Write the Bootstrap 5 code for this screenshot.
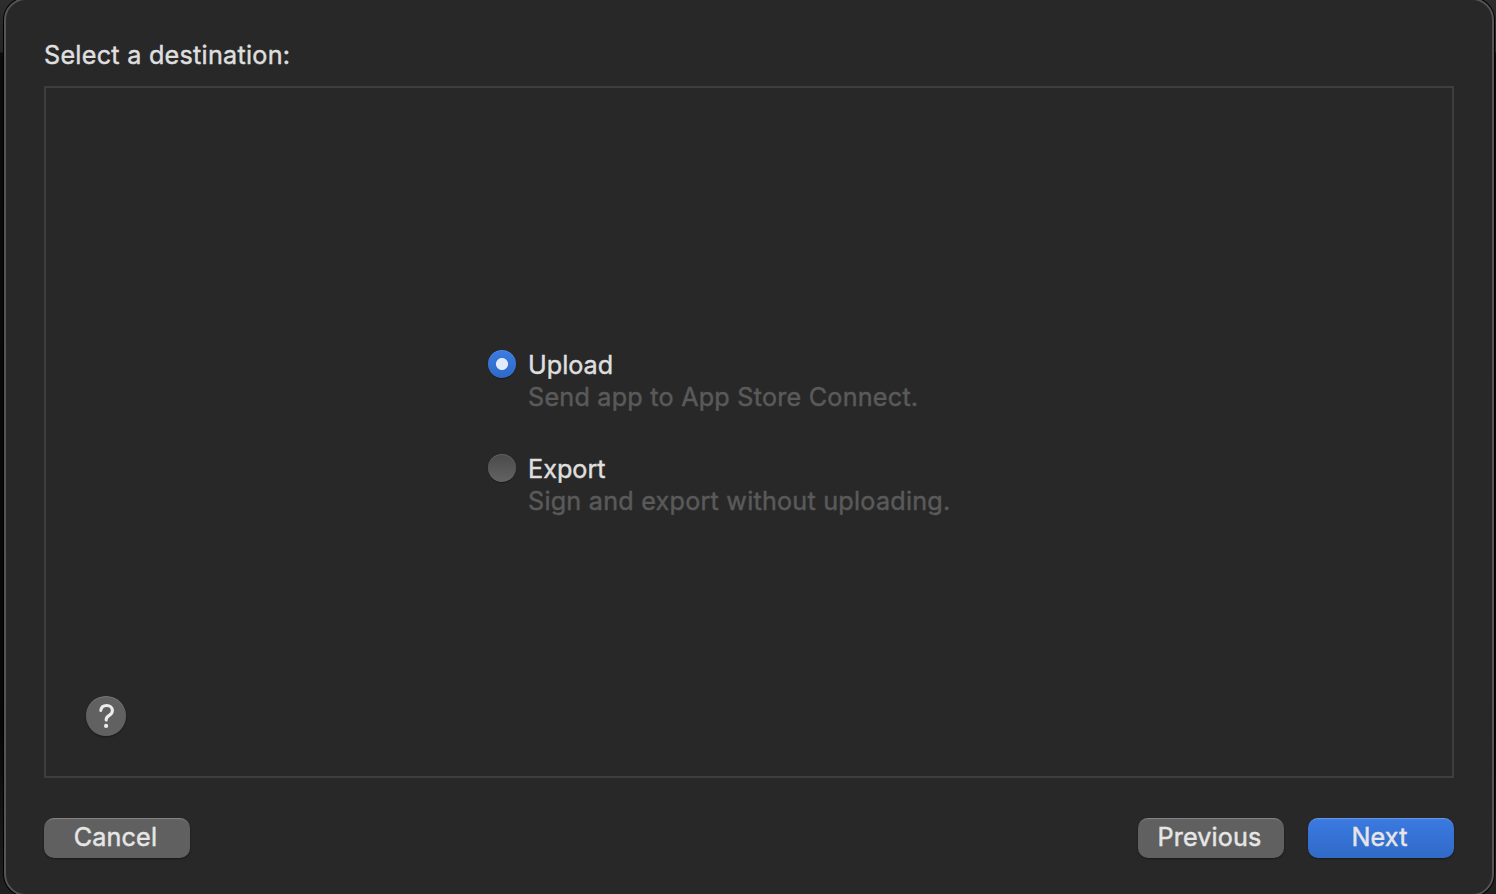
<!DOCTYPE html>
<html lang="en">
<head>
    <meta charset="UTF-8">
    <meta name="viewport" content="width=device-width, initial-scale=1">
    <title>Select a destination</title>
    <link href="https://cdn.jsdelivr.net/npm/bootstrap@5.3.3/dist/css/bootstrap.min.css" rel="stylesheet">
    <style>
        body { height: 894px; background: linear-gradient(#2d2d2d 0, #242424 52px, #0b0b0b 53px, #070707 82%, #202020); color: #dfdfdf; font: 25.2px/32px Inter, "Liberation Sans", sans-serif; -webkit-text-stroke: .45px; }
        .sheet { height: 898px; margin: -2px 2px 0 4px; padding: 40px 38px 38px; background: #282828; border: 2px solid #555; border-radius: 22px; box-shadow: 0 0 0 1px #000; }
        .sheet-title { height: 46px; font-size: 25.2px; line-height: 30px; letter-spacing: .26px; }
        .pane { height: 692px; border: 2px solid #3e3e3e; padding: 258px 40px 40px; }
        .choices { width: 480px; margin-left: 402px; }
        .choice { height: 104px; gap: 12px; }
        .choice label { padding-top: 3px; }
        .hint { color: #5a5a5a; letter-spacing: .22px; white-space: nowrap; }
        .dot { width: 28px; height: 28px; margin: 4px 0 0; border: 0; background: linear-gradient(#4a4a4a, #636363); box-shadow: 0 1px 1px rgba(0,0,0,.35), inset 0 1px 0 rgba(255,255,255,.12); }
        .dot:checked { background: radial-gradient(circle, #e1eafa 5.6px, transparent 6.4px), linear-gradient(#3b7be3, #3069c6); }
        .help { width: 40px; height: 40px; background: #616161; box-shadow: 0 1px 2px rgba(0,0,0,.35), inset 0 1px 0 rgba(255,255,255,.15); }
        .actions { margin-top: 40px; gap: 24px; }
        .push { --bs-btn-color: #e6e6e6; --bs-btn-bg: #606060; --bs-btn-hover-color: #e6e6e6; --bs-btn-hover-bg: #6a6a6a; width: 146px; height: 40px; padding: 0 3px 2px 0; border: 0; border-radius: 10px; font-size: 25.2px; line-height: 38px; letter-spacing: .12px; -webkit-text-stroke: .45px; box-shadow: 0 1px 2px rgba(0,0,0,.4), inset 0 2px 1px -1px rgba(255,255,255,.25); }
        .push-blue { background: linear-gradient(#3b7ae1, #316ac7); }
    </style>
</head>
<body class="overflow-hidden">
<div class="sheet">
    <h1 class="sheet-title fw-normal mb-0">Select a destination:</h1>
    <div class="pane d-flex flex-column justify-content-between">
        <div class="choices">
            <div class="choice d-flex">
                <input class="form-check-input dot flex-shrink-0" type="radio" name="destination" id="upload" checked>
                <label for="upload">Upload<br><span class="hint">Send app to App Store Connect.</span></label>
            </div>
            <div class="choice d-flex">
                <input class="form-check-input dot flex-shrink-0" type="radio" name="destination" id="export">
                <label for="export">Export<br><span class="hint">Sign and export without uploading.</span></label>
            </div>
        </div>
        <button type="button" class="help btn rounded-circle border-0 p-0 d-flex" aria-label="Help">
            <svg width="40" height="40" viewBox="0 0 40 40" fill="none">
                <path d="M14.8 14.4C15.2 11.2 17.4 9.5 20.6 9.5C24 9.5 26.4 11.5 26.4 14.5C26.4 16.8 25.3 18.1 23.2 19.4C21.1 20.7 20.2 21.8 20.2 23.5V24" stroke="#ececec" stroke-width="3.1" stroke-linecap="round"/>
                <circle cx="20.1" cy="29.9" r="2.1" fill="#ececec"/>
            </svg>
        </button>
    </div>
    <div class="actions d-flex">
        <button type="button" class="btn push me-auto">Cancel</button>
        <button type="button" class="btn push">Previous</button>
        <button type="button" class="btn push push-blue">Next</button>
    </div>
</div>
<script src="https://cdn.jsdelivr.net/npm/bootstrap@5.3.3/dist/js/bootstrap.bundle.min.js"></script>
</body>
</html>
